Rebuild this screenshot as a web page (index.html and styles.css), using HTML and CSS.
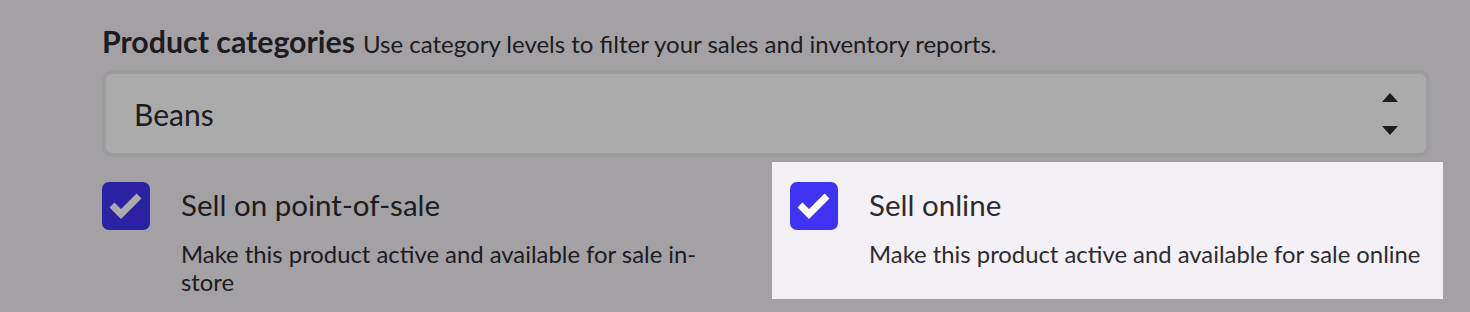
FILE: index.html
```html
<!DOCTYPE html>
<html lang="en">
<head>
<meta charset="utf-8">
<title>Product categories</title>
<link rel="stylesheet" href="styles.css">
</head>
<body>
<main class="panel">
  <div class="field-head">
    <span class="field-title">Product categories</span>
    <span class="field-hint">Use category levels to filter your sales and inventory reports.</span>
  </div>
  <div class="select">
    <span class="select-value">Beans</span>
    <span class="select-arrows">
      <svg width="16" height="42" viewBox="0 0 16 42" aria-hidden="true">
        <path d="M8 0 L16 9 L0 9 Z" fill="#2a2a2e"/>
        <path d="M0 33 L16 33 L8 42 Z" fill="#2a2a2e"/>
      </svg>
    </span>
  </div>
  <div class="options">
    <label class="option">
      <span class="check">
        <svg width="48" height="48" viewBox="0 0 48 48" aria-hidden="true">
          <path d="M10 23 L19 32 L37 14" fill="none" stroke="#fff" stroke-width="7" stroke-linejoin="miter"/>
        </svg>
      </span>
      <span class="option-text">
        <span class="option-title">Sell on point-of-sale</span>
        <span class="option-desc">Make this product active and available for sale in-store</span>
      </span>
    </label>
    <label class="option spotlight">
      <span class="check">
        <svg width="48" height="48" viewBox="0 0 48 48" aria-hidden="true">
          <path d="M10 23 L19 32 L37 14" fill="none" stroke="#fff" stroke-width="7" stroke-linejoin="miter"/>
        </svg>
      </span>
      <span class="option-text">
        <span class="option-title">Sell online</span>
        <span class="option-desc">Make this product active and available for sale online</span>
      </span>
    </label>
  </div>
</main>
</body>
</html>
```

FILE: styles.css
```css
html, body {
  margin: 0;
  padding: 0;
  background: #f3f1f5;
}
body {
  font-family: Lato, "Noto Sans", sans-serif;
  color: #2c2b30;
  min-height: 100vh;
  overflow: hidden;
}
.panel {
  width: 1328px;
  padding: 24px 0 0 102px;
}
.field-head {
  display: flex;
  align-items: baseline;
  gap: 8px;
  height: 34px;
  line-height: 34px;
}
.field-title {
  font-size: 30.3px;
  font-weight: 700;
}
.field-hint {
  font-size: 24px;
}
.select {
  margin-top: 12px;
  height: 79px;
  border: 4px solid #e9e7ec;
  border-radius: 10px;
  background: #ffffff;
  display: flex;
  align-items: center;
  justify-content: space-between;
  padding: 0 28px 0 28px;
}
.select-value {
  font-size: 30px;
  line-height: 36px;
}
.select-arrows {
  display: flex;
}
.options {
  margin-top: 5px;
  margin-left: -18px;
  display: grid;
  grid-template-columns: 671px 671px;
  column-gap: 17px;
  align-items: start;
}
.option {
  display: flex;
  align-items: flex-start;
  gap: 31px;
  padding: 20px 18px 31px 18px;
  background: #f3f1f5;
}
.spotlight {
  position: relative;
  z-index: 1;
  box-shadow: 0 0 0 3000px rgba(0, 0, 0, 0.33);
}
.check {
  flex: 0 0 48px;
  width: 48px;
  height: 48px;
  border-radius: 7px;
  background: #4033f4;
  display: flex;
}
.option-text {
  display: flex;
  flex-direction: column;
}
.option-title {
  font-size: 29.5px;
  line-height: 46px;
}
.option-desc {
  margin-top: 12px;
  font-size: 23.85px;
  line-height: 28px;
}
```
